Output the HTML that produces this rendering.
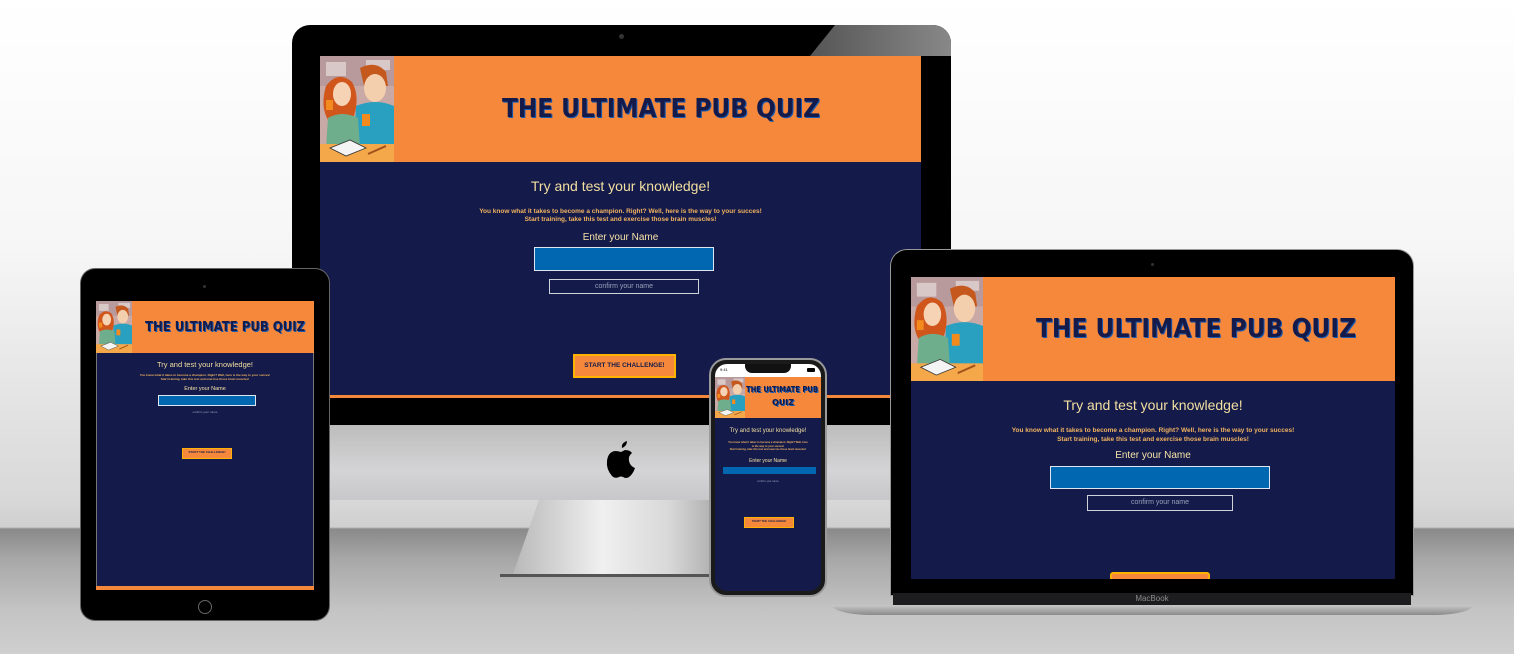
<!DOCTYPE html>
<html><head><meta charset="utf-8"><style>
*{margin:0;padding:0;box-sizing:border-box}
body{width:1514px;height:654px;overflow:hidden;position:relative;font-family:"Liberation Sans",sans-serif;
background:linear-gradient(#ffffff 0px,#f6f6f6 250px,#d8d8d8 500px,#cfcfcf 527px,#8a8a8a 529px,#a8a8a8 560px,#c4c4c4 610px,#cfcfcf 654px)}
.a{position:absolute}
.nv{background:#141b4b}
.or{background:#f5883b}
.c{text-align:center;white-space:nowrap;left:0;right:0}
.try{color:#f3dfa0}
.par{color:#f1b25f;font-weight:bold}
.en{color:#f7e3a6}
.inp{background:#0067b0;border:1px solid #dfe6ef}
.cf{border:1px solid #cfd3dc;color:#9aa0b8}
.st{background:#f5883b;border:2px solid #ffb300;color:#141b4b;font-weight:bold;text-align:center;white-space:nowrap}
svg text{font-family:"DejaVu Sans","Liberation Sans",sans-serif;font-weight:bold}
</style></head><body>
<svg width="0" height="0" style="position:absolute">
<defs>
<symbol id="pic" viewBox="0 0 74 106" preserveAspectRatio="none">
<rect width="74" height="106" fill="#c9a9a6"/>
<rect x="0" y="0" width="74" height="30" fill="#b89a9c"/>
<rect x="6" y="6" width="20" height="14" fill="#d8c8c8"/>
<rect x="46" y="4" width="24" height="10" fill="#d8c8c8"/>
<path d="M40 12 Q56 4 66 16 L68 30 L44 30 Z" fill="#c5581c"/>
<ellipse cx="55" cy="32" rx="11" ry="14" fill="#f4cfae"/>
<path d="M36 50 Q55 42 74 50 L74 90 L34 90 Z" fill="#2aa0c0"/>
<path d="M6 30 Q18 14 32 26 Q40 40 34 60 L8 64 Q0 50 6 30 Z" fill="#d0561c"/>
<ellipse cx="22" cy="38" rx="9" ry="12" fill="#f6d3b5"/>
<path d="M8 62 Q22 54 38 62 L40 92 L6 92 Z" fill="#6fae8c"/>
<rect x="6" y="44" width="7" height="10" fill="#f28a1e"/>
<rect x="42" y="58" width="8" height="12" fill="#f28a1e"/>
<rect x="0" y="88" width="74" height="18" fill="#f5a84a"/>
<path d="M10 92 L30 84 L46 92 L26 100 Z" fill="#f4f4f4" stroke="#333" stroke-width="0.8"/>
<path d="M48 98 L66 90" stroke="#a0521c" stroke-width="2"/>
</symbol>
</defs>
</svg>

<!-- iMac -->
<div class="a" style="left:292px;top:25px;width:659px;height:400px;background:#000;border-radius:18px 18px 0 0"></div>
<div class="a" style="left:810px;top:25px;width:141px;height:31px;background:linear-gradient(90deg,#555,#888);clip-path:polygon(25px 0,100% 0,100% 100%,0 100%);border-top-right-radius:18px"></div>
<div class="a" style="left:619px;top:34px;width:5px;height:5px;border-radius:50%;background:#333"></div>
<div class="a" style="left:292px;top:425px;width:659px;height:75px;background:linear-gradient(#bcbcbc,#d4d4d6 60%,#c8c8ca)"></div>
<svg class="a" style="left:604px;top:439px" width="34" height="40" viewBox="0 0 34 40"><path d="M23 2 Q23 7 18 9 Q17 4 23 2 Z M28 14 Q24 17 25 22 Q26 27 31 29 Q29 35 25 38 Q22 40 19 38 Q17 37 15 38 Q11 40 8 37 Q2 30 3 22 Q4 13 11 12 Q14 12 17 13 Q19 12 21 11 Q26 11 28 14 Z" fill="#000"/></svg>
<div class="a" style="left:512px;top:500px;width:225px;height:77px;background:linear-gradient(90deg,#b8b8b8,#f0f0f0 40%,#d8d8d8 70%,#9a9a9a);clip-path:polygon(12% 0,88% 0,100% 100%,0 100%)"></div>
<div class="a" style="left:500px;top:574px;width:240px;height:3px;background:#555"></div>
<div class="a nv" style="left:320px;top:56px;width:601px;height:342px"></div>
<div class="a or" style="left:320px;top:56px;width:601px;height:106px"></div>
<svg class="a" style="left:320px;top:56px" width="74" height="106"><use href="#pic"/></svg>
<svg class="a" style="left:500px;top:94px" width="324" height="30"><text x="3" y="24" font-size="26" fill="#1a5ab0" textLength="318" lengthAdjust="spacingAndGlyphs">THE ULTIMATE PUB QUIZ</text><text x="2" y="23" font-size="26" fill="#141b4b" textLength="318" lengthAdjust="spacingAndGlyphs">THE ULTIMATE PUB QUIZ</text></svg>
<div class="a" style="left:320px;top:0;width:601px">
<div class="a c try" style="top:178px;font-size:14px">Try and test your knowledge!</div>
<div class="a c par" style="top:208px;font-size:6.5px;line-height:7.5px">You know what it takes to become a champion. Right? Well, here is the way to your succes!<br>Start training, take this test and exercise those brain muscles!</div>
<div class="a c en" style="top:232px;font-size:10px">Enter your Name</div>
</div>
<div class="a inp" style="left:534px;top:247px;width:180px;height:24px"></div>
<div class="a cf" style="left:549px;top:279px;width:150px;height:15px;font-size:7px;text-align:center;line-height:13px">confirm your name</div>
<div class="a st" style="left:573px;top:354px;width:103px;height:24px;font-size:6.5px;line-height:20px">START THE CHALLENGE!</div>
<div class="a" style="left:320px;top:395px;width:601px;height:3px;background:#f5883b"></div>

<!-- Tablet -->
<div class="a" style="left:81px;top:269px;width:248px;height:351px;background:#000;border-radius:14px;box-shadow:0 0 0 1px #666"></div>
<div class="a" style="left:203px;top:285px;width:3px;height:3px;border-radius:50%;background:#333"></div>
<div class="a" style="left:198px;top:600px;width:14px;height:14px;border-radius:50%;border:1px solid #666"></div>
<div class="a nv" style="left:96px;top:301px;width:218px;height:289px;border:1px solid #777"></div>
<div class="a or" style="left:96px;top:301px;width:218px;height:52px"></div>
<svg class="a" style="left:96px;top:301px" width="36" height="52"><use href="#pic"/></svg>
<svg class="a" style="left:144px;top:318px" width="164" height="18"><text x="2" y="14" font-size="13" fill="#1a5ab0" textLength="160" lengthAdjust="spacingAndGlyphs">THE ULTIMATE PUB QUIZ</text><text x="1" y="13" font-size="13" fill="#141b4b" textLength="160" lengthAdjust="spacingAndGlyphs">THE ULTIMATE PUB QUIZ</text></svg>
<div class="a" style="left:96px;top:0;width:218px">
<div class="a c try" style="top:360px;font-size:7.5px">Try and test your knowledge!</div>
<div class="a c par" style="top:374px;font-size:3px;line-height:3.5px">You know what it takes to become a champion. Right? Well, here is the way to your succes!<br>Start training, take this test and exercise those brain muscles!</div>
<div class="a c en" style="top:386px;font-size:5.5px">Enter your Name</div>
<div class="a c" style="top:410px;font-size:3px;color:#9aa0b8">confirm your name</div>
<div class="a c" style="top:585px;font-size:3px;color:#555">Pub Quiz | Copyright 2024</div>
</div>
<div class="a inp" style="left:158px;top:395px;width:98px;height:11px"></div>
<div class="a st" style="left:182px;top:448px;width:50px;height:11px;font-size:3px;line-height:7px;border-width:1px">START THE CHALLENGE!</div>
<div class="a or" style="left:96px;top:586px;width:218px;height:4px"></div>

<!-- Laptop -->
<div class="a" style="left:891px;top:250px;width:522px;height:345px;background:#000;border-radius:16px 16px 0 0;box-shadow:0 0 0 1px #999"></div>
<div class="a" style="left:1151px;top:263px;width:3px;height:3px;border-radius:50%;background:#333"></div>
<div class="a nv" style="left:911px;top:277px;width:484px;height:302px"></div>
<div class="a or" style="left:911px;top:277px;width:484px;height:104px"></div>
<svg class="a" style="left:911px;top:277px" width="72" height="104"><use href="#pic"/></svg>
<svg class="a" style="left:1034px;top:314px" width="326" height="30"><text x="3" y="24" font-size="26" fill="#1a5ab0" textLength="320" lengthAdjust="spacingAndGlyphs">THE ULTIMATE PUB QUIZ</text><text x="2" y="23" font-size="26" fill="#141b4b" textLength="320" lengthAdjust="spacingAndGlyphs">THE ULTIMATE PUB QUIZ</text></svg>
<div class="a" style="left:911px;top:0;width:484px">
<div class="a c try" style="top:397px;font-size:14px">Try and test your knowledge!</div>
<div class="a c par" style="top:427px;font-size:6.5px;line-height:8.5px">You know what it takes to become a champion. Right? Well, here is the way to your succes!<br>Start training, take this test and exercise those brain muscles!</div>
<div class="a c en" style="top:450px;font-size:10px">Enter your Name</div>
</div>
<div class="a inp" style="left:1050px;top:466px;width:220px;height:23px"></div>
<div class="a cf" style="left:1087px;top:495px;width:146px;height:16px;font-size:7px;text-align:center;line-height:14px">confirm your name</div>
<div class="a" style="left:1110px;top:572px;width:100px;height:7px;background:#f5883b;border:2px solid #ffb300;border-bottom:0;border-radius:3px 3px 0 0"></div>
<div class="a" style="left:893px;top:593px;width:518px;height:12px;background:#1d1d20;color:#8a8a8a;font-size:8px;text-align:center;line-height:12px">MacBook</div>
<div class="a" style="left:832px;top:605px;width:641px;height:10px;background:linear-gradient(#c8c8c8,#8a8a8a);border-radius:0 0 40px 40px / 0 0 10px 10px"></div>

<!-- Phone -->
<div class="a" style="left:709px;top:358px;width:118px;height:239px;background:#1a1a1a;border-radius:17px;border:2px solid #9a9a9a"></div>
<div class="a nv" style="left:715px;top:364px;width:106px;height:227px;border-radius:12px;overflow:hidden">
<div class="a" style="left:0;top:0;width:106px;height:13px;background:#fff"></div>
<div class="a" style="left:30px;top:0;width:46px;height:9px;background:#111;border-radius:0 0 7px 7px"></div>
<div class="a" style="left:5px;top:3px;font-size:4px;color:#000">9:41</div>
<div class="a" style="left:92px;top:4px;width:8px;height:4px;background:#000;border-radius:1px"></div>
<div class="a or" style="left:0;top:13px;width:106px;height:41px"></div>
<svg class="a" style="left:0;top:13px" width="30" height="41"><use href="#pic"/></svg>
<svg class="a" style="left:30px;top:20px" width="76" height="30"><text x="2" y="9" font-size="8" fill="#1a5ab0" textLength="72" lengthAdjust="spacingAndGlyphs">THE ULTIMATE PUB</text><text x="1" y="8" font-size="8" fill="#141b4b" textLength="72" lengthAdjust="spacingAndGlyphs">THE ULTIMATE PUB</text><text x="28" y="22" font-size="8" fill="#1a5ab0">QUIZ</text><text x="27" y="21" font-size="8" fill="#141b4b">QUIZ</text></svg>
<div class="a c try" style="top:64px;font-size:6px">Try and test your knowledge!</div>
<div class="a c par" style="top:77px;font-size:2.6px;line-height:3.5px">You know what it takes to become a champion. Right? Well, here<br>is the way to your succes!<br>Start training, take this test and exercise those brain muscles!</div>
<div class="a c en" style="top:94px;font-size:5px">Enter your Name</div>
<div class="a inp" style="left:8px;top:103px;width:93px;height:7px;border:0"></div>
<div class="a c" style="top:116px;font-size:2.6px;color:#9aa0b8">confirm your name</div>
<div class="a st" style="left:29px;top:153px;width:50px;height:11px;font-size:2.8px;line-height:7px;border-width:1px">START THE CHALLENGE!</div>
</div>
</body></html>
